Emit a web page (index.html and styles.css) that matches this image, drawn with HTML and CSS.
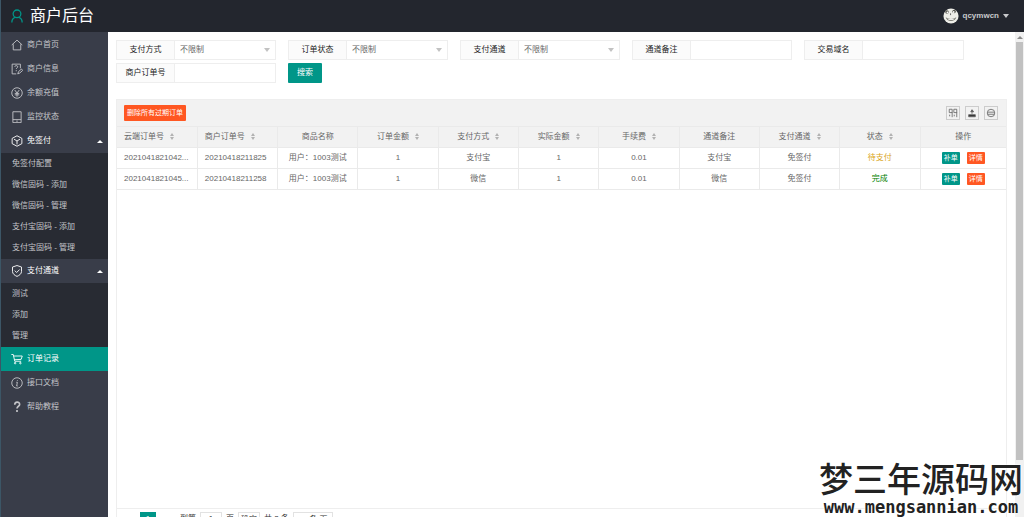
FILE: index.html
```html
<!DOCTYPE html>
<html lang="zh-CN">

<head>
    <meta charset="UTF-8">
    <meta name="viewport" content="width=device-width, initial-scale=1.0">
    <title>商户后台</title>
    <link rel="stylesheet" href="styles.css">
</head>

<body>
    <header class="header">
        <a class="logo" href="#">
            <svg class="logo-icon" viewBox="0 0 14 16"><circle cx="7" cy="5.5" r="4.5"/><path d="M1 15.5c0-4 2-5.500 4-6M13 15.500c0-4-2-5.500-4-6"/></svg>
            <span>商户后台</span>
        </a>
        <a class="user" href="#">
            <svg class="avatar" viewBox="0 0 18 18">
                <circle cx="9" cy="9" r="8.500" fill="#eeeee8"/>
                <circle cx="4.500" cy="4.500" r="2" fill="#55554d"/><circle cx="12.500" cy="4" r="2" fill="#55554d"/>
                <circle cx="5" cy="5" r="1" fill="#fff"/><circle cx="12" cy="4.500" r="1" fill="#fff"/>
                <path d="M8.500 6v2" stroke="#555" fill="none"/>
                <path d="M3 10c1 6 11 6 12 0-2 3-10 3-12 0z" fill="#77776f"/>
                <path d="M6 13h6" stroke="#fff" fill="none"/>
            </svg>
            <span>qcymwcn</span>
            <i class="caret-down"></i>
        </a>
    </header>

    <div class="layout">
        <nav class="side">
            <a class="nav-item" href="#"><svg class="icon" viewBox="0 0 16 16"><path d="M1 8l7-6.500L15 8M3 7v7.500h10V7"/></svg>商户首页</a>
            <a class="nav-item" href="#"><svg class="icon" viewBox="0 0 16 16"><path d="M7 14.500H1.500v-13h11V7M5 5c0-2 4-2 4 0 0 1.500-2 1.500-2 3M7 9.500V11M9 14.500l1-3 4-3.500 1.500 2-4 3.500z"/></svg>商户信息</a>
            <a class="nav-item" href="#"><svg class="icon" viewBox="0 0 16 16"><circle cx="8" cy="8" r="7"/><path d="M5 4l3 4 3-4M8 8v5M5 8.500h6M5 10.500h6"/></svg>余额充值</a>
            <a class="nav-item" href="#"><svg class="icon" viewBox="0 0 16 16"><path d="M2.500 1h11v14.500h-11zM2.500 11.500h11M7 13.500h2"/></svg>监控状态</a>

            <a class="nav-item nav-group" href="#"><svg class="icon" viewBox="0 0 16 16"><path d="M8 1l6.500 3.500v7L8 15l-6.500-3.500v-7zM4 5.500L8 8l4-2.500M8 8v4.500"/></svg>免签付<i class="caret-up"></i></a>
            <div class="nav-child">
                <a href="#">免签付配置</a>
                <a href="#">微信固码 - 添加</a>
                <a href="#">微信固码 - 管理</a>
                <a href="#">支付宝固码 - 添加</a>
                <a href="#">支付宝固码 - 管理</a>
            </div>

            <a class="nav-item nav-group" href="#"><svg class="icon" viewBox="0 0 16 16"><path d="M8 .7l6 2v6c0 3-3 5.300-6 6.500-3-1.200-6-3.500-6-6.500v-6zM5 7.500L7.500 10l4-4"/></svg>支付通道<i class="caret-up"></i></a>
            <div class="nav-child">
                <a href="#">测试</a>
                <a href="#">添加</a>
                <a href="#">管理</a>
            </div>

            <a class="nav-item active" href="#"><svg class="icon" viewBox="0 0 16 16"><path d="M.5 2H3l2 9h8.500M3.500 4H15l-1.500 4.500-9 .5"/><circle cx="5.500" cy="13.500" r="1"/><circle cx="12.500" cy="13.500" r="1"/></svg>订单记录</a>
            <a class="nav-item" href="#"><svg class="icon" viewBox="0 0 16 16"><circle cx="8" cy="8" r="7"/><path d="M8.500 4v1M7 7h1.500L7.500 12H9"/></svg>接口文档</a>
            <a class="nav-item" href="#"><svg class="icon icon-bold" viewBox="0 0 16 16"><path d="M5 5c0-4.500 6.500-4.500 6.500-.5C11.500 7 8 7 8 10M8 12v2.500"/></svg>帮助教程</a>
        </nav>

        <main class="content">
            <form class="search">
                <div class="field">
                    <label for="payType">支付方式</label>
                    <div class="select"><select id="payType"><option>不限制</option></select></div>
                </div>
                <div class="field">
                    <label for="orderState">订单状态</label>
                    <div class="select"><select id="orderState"><option>不限制</option></select></div>
                </div>
                <div class="field">
                    <label for="channel">支付通道</label>
                    <div class="select"><select id="channel"><option>不限制</option></select></div>
                </div>
                <div class="field">
                    <label for="remark">通道备注</label>
                    <input type="text" id="remark">
                </div>
                <div class="field">
                    <label for="domain">交易域名</label>
                    <input type="text" id="domain">
                </div>
                <div class="field">
                    <label for="orderNo">商户订单号</label>
                    <input type="text" id="orderNo">
                </div>
                <button type="button" class="btn-search">搜索</button>
            </form>

            <section class="table-box">
                <div class="toolbar">
                    <button type="button" class="btn-clear">删除所有过期订单</button>
                    <div class="tools">
                        <button type="button" aria-label="筛选列"><svg viewBox="0 0 12 12"><path d="M1.500 1.500h3.500v4H1.500zM7 1.500h3.500v4H7zM5 5v6M10.500 5v6M2 8v2M7.500 8v2"/></svg></button>
                        <button type="button" aria-label="导出"><svg viewBox="0 0 12 12"><path d="M2 8h8v2.500H2zM6 7V3M4.500 4.500L6 2l2 2.500z" fill="#333"/></svg></button>
                        <button type="button" aria-label="打印"><svg viewBox="0 0 12 12"><circle cx="6" cy="6" r="4.500"/><path d="M2 5h8M2 7.500h8"/></svg></button>
                    </div>
                </div>
                <table>
                    <thead>
                        <tr>
                            <th class="left">云端订单号<i class="sort"></i></th>
                            <th class="left">商户订单号<i class="sort"></i></th>
                            <th>商品名称</th>
                            <th>订单金额<i class="sort"></i></th>
                            <th>支付方式<i class="sort"></i></th>
                            <th>实际金额<i class="sort"></i></th>
                            <th>手续费<i class="sort"></i></th>
                            <th>通道备注</th>
                            <th>支付通道<i class="sort"></i></th>
                            <th>状态<i class="sort"></i></th>
                            <th class="op-col">操作</th>
                        </tr>
                    </thead>
                    <tbody>
                        <tr>
                            <td class="left">2021041821042...</td>
                            <td class="left">20210418211825</td>
                            <td>用户：1003测试</td>
                            <td>1</td>
                            <td>支付宝</td>
                            <td>1</td>
                            <td>0.01</td>
                            <td>支付宝</td>
                            <td>免签付</td>
                            <td class="wait">待支付</td>
                            <td><div class="ops"><button type="button" class="btn-fix">补单</button><button type="button" class="btn-detail">详情</button></div></td>
                        </tr>
                        <tr>
                            <td class="left">2021041821045...</td>
                            <td class="left">20210418211258</td>
                            <td>用户：1003测试</td>
                            <td>1</td>
                            <td>微信</td>
                            <td>1</td>
                            <td>0.01</td>
                            <td>微信</td>
                            <td>免签付</td>
                            <td class="done">完成</td>
                            <td><div class="ops"><button type="button" class="btn-fix">补单</button><button type="button" class="btn-detail">详情</button></div></td>
                        </tr>
                    </tbody>
                </table>
                <div class="pager">
                    <a href="#">‹</a>
                    <a href="#" class="current">1</a>
                    <a href="#">›</a>
                    <label for="page">到第</label>
                    <input type="text" id="page" value="1">
                    <span>页</span>
                    <button type="button">确定</button>
                    <span>共 2 条</span>
                    <select aria-label="每页条数"><option>10 条/页</option></select>
                </div>
            </section>
        </main>

        <div class="scrollbar">
            <i class="caret-up"></i>
            <div class="thumb"></div>
        </div>
    </div>

    <div class="watermark">
        <div class="mark-name">梦三年源码网</div>
        <div class="mark-url">www.mengsannian.com</div>
    </div>
</body>

</html>
```
FILE: styles.css
```css
* {
    box-sizing: border-box;
}

body {
    display: flex;
    flex-direction: column;
    height: 100vh;
    margin: 0;
    overflow: hidden;
    border-left: 1px solid #3c5666;
    background: #fff;
    color: #666;
    font-family: "Liberation Sans", "Noto Sans CJK SC", sans-serif;
    font-size: 8px;
    line-height: 12px;
}

a {
    color: inherit;
    text-decoration: none;
}

button,
input,
select {
    margin: 0;
    padding: 0;
    border: 0;
    border-radius: 0;
    background: none;
    color: inherit;
    font: inherit;
}

svg {
    fill: none;
    stroke: currentColor;
}

/* header */
.header {
    display: flex;
    flex: none;
    justify-content: space-between;
    align-items: center;
    height: 32px;
    padding: 0 15px 0 10px;
    background: #23262e;
}

.logo {
    display: flex;
    align-items: center;
    gap: 7px;
    color: #fff;
    font-size: 16px;
    line-height: 32px;
}

.logo-icon {
    width: 12px;
    height: 14px;
    color: #009688;
    stroke-width: 1.5;
}

.user {
    display: flex;
    align-items: center;
    gap: 4px;
    color: #c8c9cc;
    font-weight: bold;
}

.avatar {
    width: 16px;
    height: 16px;
    stroke: none;
}

.caret-down {
    border: 3px solid transparent;
    border-top: 4px solid #c8c9cc;
    border-bottom: 0;
}

.caret-up {
    border: 3px solid transparent;
    border-top: 0;
    border-bottom: 3px solid #fff;
}

.layout {
    display: flex;
    flex: 1;
    min-height: 0;
}

/* side menu */
.side {
    flex: none;
    width: 107px;
    padding-top: 1px;
    background: #393d49;
    color: #c4c5c9;
}

.nav-item {
    display: flex;
    align-items: center;
    gap: 4px;
    height: 24px;
    padding: 0 5px 0 10px;
}

.nav-group {
    color: #fff;
}

.nav-group .caret-up {
    margin-left: auto;
}

.icon {
    width: 12px;
    height: 12px;
    stroke-width: 1.2;
}

.icon-bold {
    stroke-width: 2.2;
}

.nav-child {
    padding-bottom: 1px;
    background: #282b33;
}

.nav-child a {
    display: block;
    padding-left: 11px;
    line-height: 21px;
}

.active {
    background: #009688;
    color: #fff;
}

/* search form */
.content {
    display: flex;
    flex: 1;
    flex-direction: column;
    min-width: 0;
    padding: 8px 8px 0;
}

.search {
    display: flex;
    flex-wrap: wrap;
    gap: 3px 12px;
    margin-bottom: 16px;
}

.field {
    display: flex;
    width: 160px;
    height: 20px;
    border: 1px solid #eee;
}

.field label {
    width: 58px;
    border-right: 1px solid #eee;
    background: #fbfbfb;
    color: #222;
    line-height: 18px;
    text-align: center;
}

.field input,
.select {
    position: relative;
    flex: 1;
    min-width: 0;
}

.select::after {
    content: "";
    position: absolute;
    top: 7px;
    right: 5px;
    border: 3px solid transparent;
    border-top: 4px solid #c2c2c2;
    border-bottom: 0;
    pointer-events: none;
}

.select select {
    width: 100%;
    height: 18px;
    padding-left: 5px;
    appearance: none;
}

.btn-search {
    width: 34px;
    height: 20px;
    border-radius: 1px;
    background: #009688;
    color: #fff;
}

/* orders table */
.table-box {
    display: flex;
    flex: 1;
    flex-direction: column;
    margin-bottom: -16px;
    border: 1px solid #eee;
}

.toolbar {
    display: flex;
    justify-content: space-between;
    align-items: center;
    height: 26px;
    padding: 0 8px 0 7px;
    background: #f2f2f2;
}

.btn-clear {
    width: 62px;
    height: 16px;
    border-radius: 1px;
    background: #ff5722;
    color: #fff;
    font-size: 7px;
}

.tools {
    display: flex;
    gap: 5px;
}

.tools button {
    display: flex;
    justify-content: center;
    align-items: center;
    width: 14px;
    height: 14px;
    border: 1px solid #ccc;
}

.tools svg {
    width: 10px;
    height: 10px;
}

table {
    width: 100%;
    table-layout: fixed;
    border-collapse: collapse;
}

th,
td {
    height: 21px;
    padding: 0;
    border: 1px solid #eaeaea;
    font-weight: normal;
    text-align: center;
    white-space: nowrap;
}

th {
    background: #f2f2f2;
}

th:first-child,
td:first-child {
    border-left: 0;
}

th:last-child,
td:last-child {
    border-right: 0;
}

.left {
    padding-left: 7px;
    text-align: left;
}

.op-col {
    width: 86px;
}

.sort {
    display: inline-flex;
    flex-direction: column;
    gap: 1px;
    margin-left: 6px;
    vertical-align: middle;
}

.sort::before,
.sort::after {
    content: "";
    border: 2px solid transparent;
}

.sort::before {
    border-top: 0;
    border-bottom: 3px solid #b2b2b2;
}

.sort::after {
    border-top: 3px solid #b2b2b2;
    border-bottom: 0;
}

.wait {
    color: #daa520;
}

.done {
    color: #008000;
}

.ops {
    display: flex;
    justify-content: center;
    gap: 7px;
}

.ops button {
    width: 18px;
    height: 12px;
    border-radius: 1px;
    color: #fff;
    font-size: 7px;
}

.btn-fix {
    background: #009688;
}

.ops .btn-detail {
    background: #ff5722;
}

.pager {
    display: flex;
    gap: 4px;
    margin-top: auto;
    padding: 3px 3px 6px;
    border-top: 1px solid #eee;
    color: #333;
    line-height: 14px;
}

.pager a {
    width: 16px;
    height: 14px;
    text-align: center;
}

.pager .current {
    background: #009688;
    color: #fff;
}

.pager input,
.pager button,
.pager select {
    width: 22px;
    height: 14px;
    border: 1px solid #e2e2e2;
    text-align: center;
}

.pager select {
    width: 40px;
    appearance: none;
}

/* scrollbar of the page frame */
.scrollbar {
    display: flex;
    flex: none;
    flex-direction: column;
    align-items: center;
    gap: 3px;
    width: 9px;
    padding-top: 4px;
    background: #f1f1f1;
}

.scrollbar .caret-up {
    border-bottom-color: #8a8a8a;
}

.thumb {
    width: 7px;
    height: 87%;
    background: #c1c1c1;
}

.watermark {
    position: absolute;
    right: 1px;
    bottom: 0;
    color: #222;
    text-align: center;
    text-shadow: 0 0 2px #fff, 0 0 3px #fff;
}

.mark-name {
    font-size: 34px;
    font-weight: 500;
    line-height: 34px;
}

.mark-url {
    font-family: "DejaVu Sans Mono", monospace;
    font-size: 17px;
    font-weight: bold;
    line-height: 20px;
}
```
